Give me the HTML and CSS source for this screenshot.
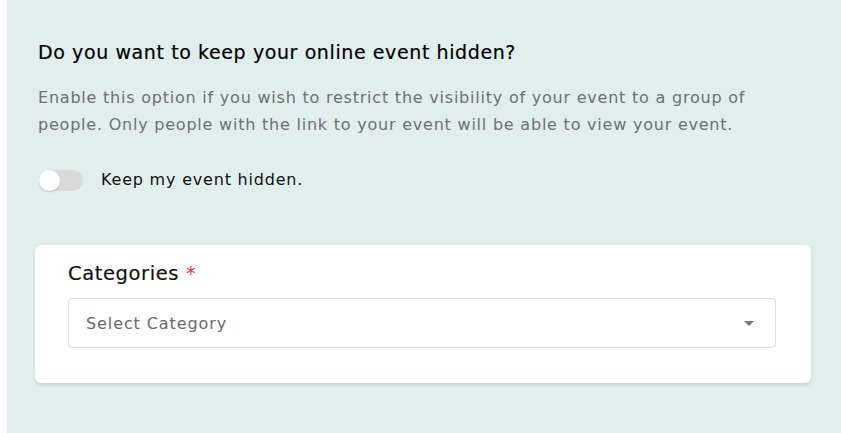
FILE: index.html
```html
<!DOCTYPE html>
<html lang="en">
<head>
<meta charset="utf-8">
<title>Event visibility</title>
<link rel="stylesheet" href="styles.css">
</head>
<body>
<main class="panel">
  <section class="visibility">
    <h2 class="visibility-title">Do you want to keep your online event hidden?</h2>
    <p class="visibility-desc">Enable this option if you wish to restrict the visibility of your event to a group of people. Only people with the link to your event will be able to view your event.</p>
    <label class="toggle-row">
      <span class="toggle"><span class="toggle-knob"></span></span>
      <span class="toggle-label">Keep my event hidden.</span>
    </label>
  </section>
  <section class="card">
    <div class="field-label">Categories <span class="required">*</span></div>
    <div class="select">
      <span class="select-placeholder">Select Category</span>
      <span class="select-arrow"></span>
    </div>
  </section>
</main>
</body>
</html>
```
FILE: styles.css
```css
* { box-sizing: border-box; }
html, body { margin: 0; padding: 0; }
body {
  background: #ffffff;
  font-family: "DejaVu Sans", "Noto Sans", sans-serif;
  width: 841px;
  height: 433px;
  overflow: hidden;
}
.panel {
  margin-left: 7px;
  height: 433px;
  background: #e0eeee;
  padding: 38px 30px 0 28px;
  display: flex;
  flex-direction: column;
}
.visibility {
  padding-left: 3px;
}
.visibility-title {
  margin: 0;
  font-size: 19px;
  font-weight: 400;
  letter-spacing: 0.6px;
  line-height: 28px;
  color: #000;
  -webkit-text-stroke: 0.2px #000;
}
.visibility-desc {
  margin: 18px 0 0;
  font-size: 16px;
  letter-spacing: 0.78px;
  line-height: 27px;
  color: #6d7172;
  width: 722px;
}
.toggle-row {
  display: flex;
  align-items: center;
  margin-top: 31px;
  gap: 18px;
}
.toggle {
  position: relative;
  width: 44px;
  height: 21px;
  border-radius: 11px;
  background: #d9d9d9;
  margin-left: 1px;
}
.toggle-knob {
  position: absolute;
  left: 0;
  top: 0;
  width: 21px;
  height: 21px;
  border-radius: 50%;
  background: #fff;
  box-shadow: 0 1px 2px rgba(0,0,0,0.15);
}
.toggle-label {
  font-size: 16px;
  letter-spacing: 0.8px;
  line-height: 22px;
  color: #111;
}
.card {
  margin-top: 54px;
  background: #fff;
  border-radius: 6px;
  box-shadow: 0 2px 4px rgba(0,0,0,0.12);
  padding: 15px 35px 35px 33px;
}
.field-label {
  font-size: 19.5px;
  font-weight: 400;
  letter-spacing: 0.6px;
  line-height: 28px;
  color: #111;
  -webkit-text-stroke: 0.2px #111;
  margin-bottom: 10px;
}
.required { color: #f0333a; -webkit-text-stroke: 0; }
.select {
  height: 50px;
  border: 1px solid #dcdcdc;
  border-radius: 4px;
  display: flex;
  align-items: center;
  justify-content: space-between;
  padding: 0 21px 0 17px;
}
.select-placeholder {
  font-size: 16px;
  letter-spacing: 0.9px;
  color: #6a6a6a;
}
.select-arrow {
  width: 0;
  height: 0;
  border-left: 5px solid transparent;
  border-right: 5px solid transparent;
  border-top: 5px solid #777;
}
```
